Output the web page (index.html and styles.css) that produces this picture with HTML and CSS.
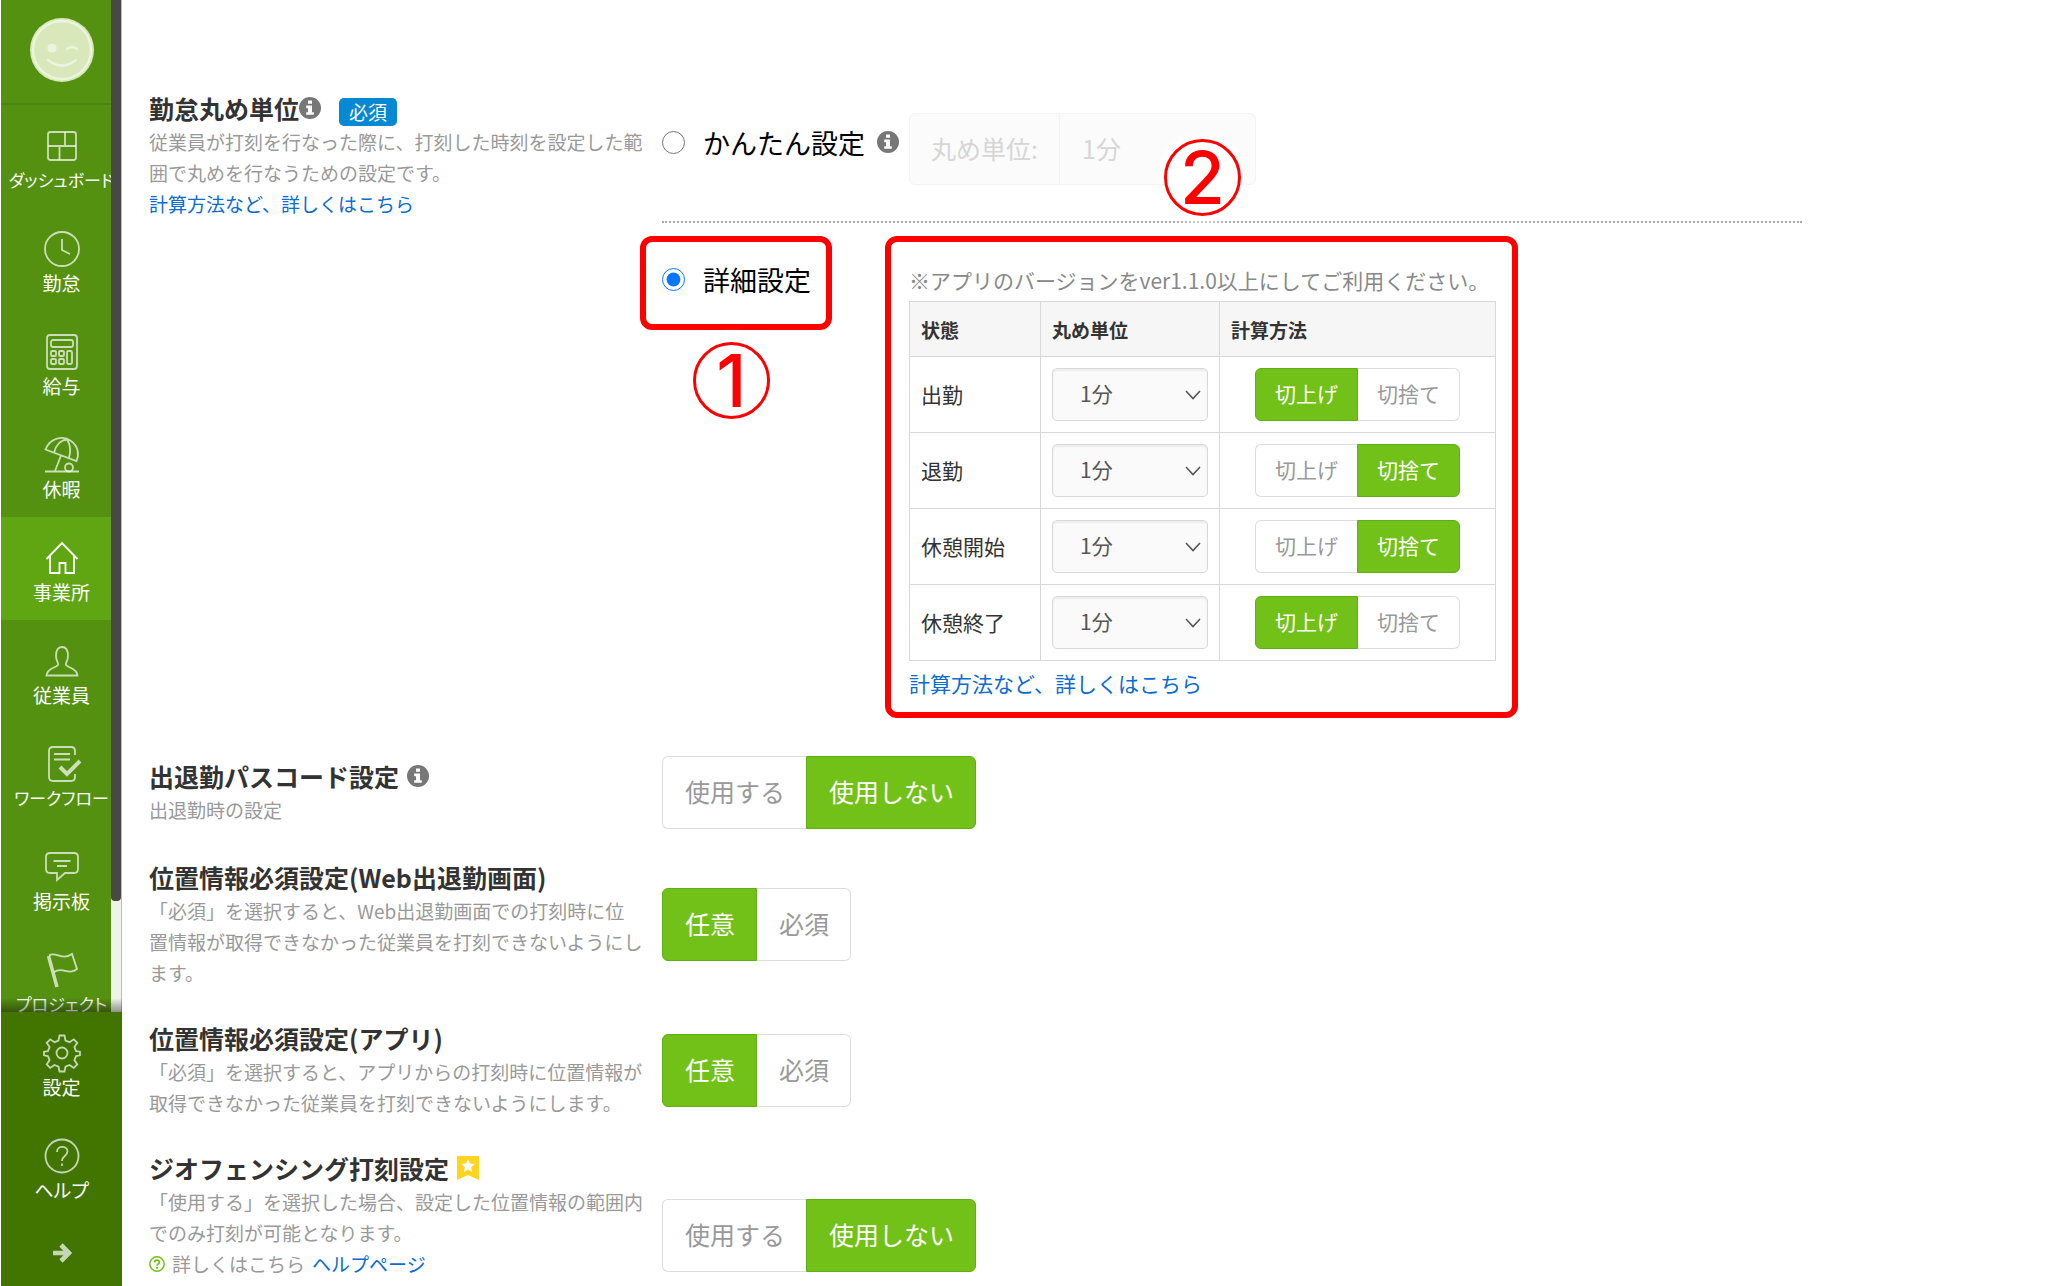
FILE: index.html
```html
<!DOCTYPE html>
<html lang="ja">
  <head>
    <meta charset="UTF-8" />
    <meta name="viewport" content="width=device-width, initial-scale=1.0" />
    <title>事業所設定</title>
    <link rel="stylesheet" href="styles.css">
  </head>
  <body>
    <!-- アイコン定義 -->
    <svg class="icon-defs" width="0" height="0" aria-hidden="true">
      <symbol id="icon-info" viewBox="0 0 22 22">
        <circle cx="11" cy="11" r="11" fill="#777" />
        <path d="M9 3.6h4v3.2H9zM7.2 8.6h5.8v6.6h1.8v2.6H7.2v-2.6H9v-4H7.2z" fill="#fff" />
      </symbol>
      <symbol id="icon-chevron" viewBox="0 0 16 10">
        <path d="M1 1l7 7.5L15 1" fill="none" stroke="#555" stroke-width="1.6" />
      </symbol>
    </svg>

    <aside class="sidebar">
      <nav class="sidebar-scroll">
        <a href="#" class="avatar" aria-label="マイページ">
          <svg width="64" height="64" viewBox="0 0 64 64">
            <circle cx="32" cy="32" r="32" fill="#d8e8ba" />
            <circle cx="32" cy="32" r="29" fill="none" stroke="#ecf4e0" stroke-width="2.4" />
            <circle cx="22" cy="30" r="4.6" fill="#ecf4e0" />
            <path d="M37 31q5-4 10 0M18 42q14 11 28 0" fill="none" stroke="#ecf4e0" stroke-width="2.4" stroke-linecap="round" />
          </svg>
        </a>
        <a href="#" class="nav-item long">
          <svg class="nav-icon" viewBox="0 0 40 40">
            <rect x="6" y="6" width="28" height="28" rx="2.5" />
            <path d="M6 20h28M23 6v14M17.500 20v14" />
          </svg>
          <span>ダッシュボード</span>
        </a>
        <a href="#" class="nav-item">
          <svg class="nav-icon" viewBox="0 0 40 40">
            <circle cx="20" cy="20" r="17" />
            <path d="M20 10v11l8 4" />
          </svg>
          <span>勤怠</span>
        </a>
        <a href="#" class="nav-item">
          <svg class="nav-icon" viewBox="0 0 40 40">
            <rect x="5" y="3" width="30" height="34" rx="3" />
            <rect x="9" y="8" width="22" height="7" rx="2" />
            <rect x="9" y="19" width="5" height="5" rx="1" />
            <rect x="17" y="19" width="5" height="5" rx="1" />
            <rect x="9" y="27" width="5" height="5" rx="1" />
            <rect x="17" y="27" width="5" height="5" rx="1" />
            <rect x="25" y="19" width="5" height="13" rx="1.500" />
          </svg>
          <span>給与</span>
        </a>
        <a href="#" class="nav-item">
          <svg class="nav-icon" viewBox="0 0 40 40">
            <path d="M3.500 14.500C8 3 21 0 29 6c7 5 8.500 13 5.500 20zM12 17.500C14 10 19 5 25 4.500M27 23c2-7 1-14-2-18.500M19 20.500L13 36M3 36.500h34" />
            <circle cx="27" cy="32.500" r="4" />
          </svg>
          <span>休暇</span>
        </a>
        <a href="#" class="nav-item active">
          <svg class="nav-icon" viewBox="0 0 40 40">
            <path d="M4.500 21L20 5l15.500 16M8 18v17h9.500V25h6v10H32V18" />
          </svg>
          <span>事業所</span>
        </a>
        <a href="#" class="nav-item">
          <svg class="nav-icon" viewBox="0 0 40 40">
            <path d="M16 24c1-2-2-4-2-9 0-6 2-9 6-9s6 3 6 9c0 5-3 7-2 9 2 3 11 3 11.500 10.500h-31C5 27 14 27 16 24z" />
          </svg>
          <span>従業員</span>
        </a>
        <a href="#" class="nav-item long">
          <svg class="nav-icon" viewBox="0 0 40 40">
            <path d="M33 11V7q0-4-4-4H11q-4 0-4 4v26q0 4 4 4h18q4 0 4-4v-3M12 10h16M12 15.500h16" />
            <path d="M18 23l7 7L38 17" stroke-width="4" />
          </svg>
          <span>ワークフロー</span>
        </a>
        <a href="#" class="nav-item">
          <svg class="nav-icon" viewBox="0 0 40 40">
            <path d="M8 6h24q4 0 4 4v12q0 4-4 4h-9l-8 7v-7H8q-4 0-4-4V10q0-4 4-4zM11.500 14h17M15 19h10" />
          </svg>
          <span>掲示板</span>
        </a>
        <a href="#" class="nav-item long">
          <svg class="nav-icon" viewBox="0 0 40 40">
            <path d="M7 5.500C14 1 20 11 30 4l5 15c-9 7-14-3-23 3" />
            <path d="M6.500 6L15 37" stroke-width="3.500" />
          </svg>
          <span>プロジェクト</span>
        </a>
        <div class="scroll-track"><div class="scroll-thumb"></div></div>
      </nav>
      <div class="sidebar-bottom">
        <a href="#" class="nav-item">
          <svg class="nav-icon" viewBox="0 0 40 40">
            <path d="M17.500 2.500h5l1 5 4 1.700 4.300-2.900 3.500 3.500-2.900 4.300 1.700 4 3.900.6v3.600l-3.900.8-1.700 4 2.900 4.300-3.500 3.500-4.300-2.900-4 1.700-1 4.800h-5l-1-4.800-4-1.700-4.300 2.900-3.500-3.500 2.900-4.300-1.700-4-3.900-.8v-3.600l3.900-.6 1.700-4-2.900-4.300 3.500-3.500 4.300 2.900 4-1.700z" />
            <circle cx="20" cy="20" r="5.500" />
          </svg>
          <span>設定</span>
        </a>
        <a href="#" class="nav-item">
          <svg class="nav-icon" viewBox="0 0 40 40">
            <circle cx="20" cy="20" r="16.500" />
            <path d="M15 16c0-7 10.500-6.500 10.500-.5 0 4.500-5.500 4-5.500 9.500M20 27.500v2.500" />
          </svg>
          <span>ヘルプ</span>
        </a>
        <button type="button" class="sidebar-expand" aria-label="メニューを開く">
          <svg width="20" height="20" viewBox="0 0 20 20">
            <path d="M1 10h15M9 2l8 8-8 8" fill="none" stroke="currentColor" stroke-width="4.600" />
          </svg>
        </button>
      </div>
    </aside>

    <main class="content">
      <section class="setting-row rounding">
        <div class="setting-label">
          <h2>勤怠丸め単位<svg class="info"><use href="#icon-info" /></svg><span class="badge">必須</span></h2>
          <p>従業員が打刻を行なった際に、打刻した時刻を設定した範囲で丸めを行なうための設定です。</p>
          <a href="#">計算方法など、詳しくはこちら</a>
        </div>
        <div class="setting-field">
          <div class="option option-simple">
            <div class="option-name">
              <input type="radio" name="rounding" id="rounding-simple" />
              <label for="rounding-simple">かんたん設定</label>
              <svg class="info"><use href="#icon-info" /></svg>
            </div>
            <div class="simple-unit">
              <label for="simple-unit">丸め単位:</label>
              <select id="simple-unit" disabled>
                <option>1分</option>
              </select>
            </div>
          </div>
          <div class="option option-detail">
            <div class="option-name">
              <input type="radio" name="rounding" id="rounding-detail" checked />
              <label for="rounding-detail">詳細設定</label>
            </div>
            <div class="detail-body">
              <p class="note">※アプリのバージョンをver1.1.0以上にしてご利用ください。</p>
              <table>
                <thead>
                  <tr>
                    <th class="col-state">状態</th>
                    <th class="col-unit">丸め単位</th>
                    <th class="col-method">計算方法</th>
                  </tr>
                </thead>
                <tbody>
                  <tr>
                    <td>出勤</td>
                    <td>
                      <div class="select-box">
                        <select aria-label="出勤の丸め単位"><option>1分</option></select>
                        <svg><use href="#icon-chevron" /></svg>
                      </div>
                    </td>
                    <td>
                      <div class="toggle small">
                        <button type="button" class="on">切上げ</button>
                        <button type="button">切捨て</button>
                      </div>
                    </td>
                  </tr>
                  <tr>
                    <td>退勤</td>
                    <td>
                      <div class="select-box">
                        <select aria-label="退勤の丸め単位"><option>1分</option></select>
                        <svg><use href="#icon-chevron" /></svg>
                      </div>
                    </td>
                    <td>
                      <div class="toggle small">
                        <button type="button">切上げ</button>
                        <button type="button" class="on">切捨て</button>
                      </div>
                    </td>
                  </tr>
                  <tr>
                    <td>休憩開始</td>
                    <td>
                      <div class="select-box">
                        <select aria-label="休憩開始の丸め単位"><option>1分</option></select>
                        <svg><use href="#icon-chevron" /></svg>
                      </div>
                    </td>
                    <td>
                      <div class="toggle small">
                        <button type="button">切上げ</button>
                        <button type="button" class="on">切捨て</button>
                      </div>
                    </td>
                  </tr>
                  <tr>
                    <td>休憩終了</td>
                    <td>
                      <div class="select-box">
                        <select aria-label="休憩終了の丸め単位"><option>1分</option></select>
                        <svg><use href="#icon-chevron" /></svg>
                      </div>
                    </td>
                    <td>
                      <div class="toggle small">
                        <button type="button" class="on">切上げ</button>
                        <button type="button">切捨て</button>
                      </div>
                    </td>
                  </tr>
                </tbody>
              </table>
              <a href="#" class="detail-link">計算方法など、詳しくはこちら</a>
            </div>

            <!-- 手順の注釈 -->
            <div class="mark mark-option"></div>
            <div class="mark mark-table"></div>
            <span class="step step-1">1</span>
            <span class="step step-2">2</span>
          </div>
        </div>
      </section>

      <section class="setting-row">
        <div class="setting-label">
          <h2>出退勤パスコード設定<svg class="info spaced"><use href="#icon-info" /></svg></h2>
          <p>出退勤時の設定</p>
        </div>
        <div class="toggle">
          <button type="button">使用する</button>
          <button type="button" class="on">使用しない</button>
        </div>
      </section>

      <section class="setting-row">
        <div class="setting-label">
          <h2>位置情報必須設定(Web出退勤画面)</h2>
          <p>「必須」を選択すると、Web出退勤画面での打刻時に位<br />置情報が取得できなかった従業員を打刻できないようにします。</p>
        </div>
        <div class="toggle">
          <button type="button" class="on">任意</button>
          <button type="button">必須</button>
        </div>
      </section>

      <section class="setting-row">
        <div class="setting-label">
          <h2>位置情報必須設定(アプリ)</h2>
          <p>「必須」を選択すると、アプリからの打刻時に位置情報が取得できなかった従業員を打刻できないようにします。</p>
        </div>
        <div class="toggle">
          <button type="button" class="on">任意</button>
          <button type="button">必須</button>
        </div>
      </section>

      <section class="setting-row geofence">
        <div class="setting-label">
          <h2>ジオフェンシング打刻設定<svg class="star" viewBox="0 0 22 24">
              <path d="M0 0h22v24l-11-5-11 5z" fill="#ffd41f" />
              <path d="M11 3l2 4.500 4.800.5-3.600 3.300 1 4.800L11 13.600l-4.200 2.500 1-4.800L4.200 8l4.800-.5z" fill="#fff" />
            </svg></h2>
          <p>「使用する」を選択した場合、設定した位置情報の範囲内でのみ打刻が可能となります。</p>
          <p class="help-line">
            <svg width="16" height="16" viewBox="0 0 16 16">
              <circle cx="8" cy="8" r="7.200" fill="none" stroke="#72c118" stroke-width="1.500" />
              <path d="M5.700 6.500c0-3.200 4.700-3 4.700-.3 0 1.700-2.300 1.700-2.300 3.500M8 11v1.800" fill="none" stroke="#72c118" stroke-width="1.800" />
            </svg>
            <span>詳しくはこちら</span>
            <a href="#">ヘルプページ</a>
          </p>
        </div>
        <div class="toggle">
          <button type="button">使用する</button>
          <button type="button" class="on">使用しない</button>
        </div>
      </section>
    </main>
  </body>
</html>
```
FILE: styles.css
```css
* {
  margin: 0;
  padding: 0;
  box-sizing: border-box;
}

body {
  display: flex;
  height: 100vh;
  overflow: hidden;
  background-color: #fff;
  color: #333;
  font-family: "Noto Sans CJK JP", sans-serif;
  font-size: 19px;
  line-height: 31px;
}

a {
  color: #0a6bd0;
  text-decoration: none;
}

button,
select {
  font-family: inherit;
}

.icon-defs {
  position: absolute;
}

/* サイドバー */
.sidebar {
  display: flex;
  flex-direction: column;
  flex: none;
  width: 121px;
  margin-left: 1px;
}

.sidebar-scroll {
  position: relative;
  flex: 1;
  overflow: hidden;
  background-color: #549110;
}

.sidebar-scroll::after {
  content: "";
  position: absolute;
  left: 0;
  right: 0;
  bottom: 0;
  height: 14px;
  background: linear-gradient(rgba(0, 0, 0, 0), rgba(0, 0, 0, 0.4));
}

.avatar {
  display: block;
  height: 105px;
  padding-top: 18px;
  border-bottom: 2px solid #4b8510;
  text-align: center;
}

.nav-item {
  display: flex;
  flex-direction: column;
  align-items: center;
  height: 103px;
  padding-top: 21px;
  color: #fff;
  line-height: 28px;
  white-space: nowrap;
  font-feature-settings: "palt";
}

.nav-item.long {
  font-size: 17px;
}

.nav-item.active {
  background-color: #60a613;
}

.nav-icon {
  flex: none;
  width: 40px;
  height: 40px;
  fill: none;
  stroke: rgba(255, 255, 255, 0.7);
  stroke-width: 1.8;
}

.nav-item.active .nav-icon {
  stroke: #fff;
}

.scroll-track {
  position: absolute;
  top: 0;
  right: 0;
  width: 11px;
  height: 100%;
  background-color: #eef4e8;
  border-right: 1px solid #bbb;
}

.scroll-thumb {
  height: 89%;
  background-color: #4a4846;
  border-radius: 0 0 4px 4px;
}

.sidebar-bottom {
  height: 274px;
  background-color: #417500;
}

.sidebar-expand {
  display: flex;
  justify-content: center;
  width: 100%;
  padding-top: 25px;
  border: none;
  background: none;
  color: #c6d5b3;
}

/* 設定一覧 */
.content {
  display: flex;
  flex-direction: column;
  gap: 30px;
  flex: 1;
  min-width: 0;
  padding: 90px 12% 0 27px;
}

.setting-row {
  display: grid;
  grid-template-columns: 497px 1fr;
  column-gap: 16px;
  align-items: center;
  flex: none;
}

.setting-row.rounding {
  align-items: start;
}

.setting-row.geofence {
  min-height: 171px;
}

.geofence .setting-label {
  align-self: start;
}

.setting-label {
  padding-bottom: 2px;
}

.setting-label h2 {
  display: flex;
  align-items: center;
  font-size: 25px;
  line-height: 36px;
}

.setting-label p {
  color: #999;
}

.info {
  flex: none;
  width: 22px;
  height: 22px;
}

.info.spaced {
  margin-left: 8px;
}

.star {
  width: 22px;
  height: 24px;
  margin-left: 8px;
}

.badge {
  align-self: flex-end;
  margin-left: 18px;
  padding: 0 10px;
  border-radius: 5px;
  background-color: #0688d2;
  color: #fff;
  font-size: 19px;
  font-weight: normal;
  line-height: 28px;
}

.help-line {
  display: flex;
  align-items: center;
  gap: 7px;
}

/* 切り替えボタン */
.toggle {
  display: flex;
}

.toggle button {
  height: 73px;
  padding: 0 21px 3px 22px;
  border: 1px solid #ddd;
  background-color: #fff;
  color: #999;
  font-size: 25px;
}

.toggle button:first-child {
  border-right: none;
  border-radius: 6px 0 0 6px;
}

.toggle button:last-child {
  border-left: none;
  border-radius: 0 6px 6px 0;
}

.toggle button.on {
  border: 1px solid #62ad12;
  background-color: #72c118;
  color: #fff;
}

.toggle.small {
  justify-content: center;
}

.toggle.small button {
  height: 53px;
  padding: 0 19px 3px;
  font-size: 21px;
}

/* 丸め設定 */
.setting-field {
  padding: 23px 0 24px;
}

.option {
  display: grid;
  grid-template-columns: 247px 1fr;
  align-items: start;
}

.option-simple {
  padding-bottom: 36px;
  border-bottom: 2px dotted #aaa;
}

.option-detail {
  position: relative;
  padding-top: 37px;
}

.option-name {
  display: flex;
  align-items: center;
  height: 38px;
  color: #000;
  font-size: 27px;
}

.option-simple .option-name {
  margin-top: 10px;
}

.option-name input {
  width: 23px;
  height: 23px;
  margin-right: 18px;
  accent-color: #0a75ff;
}

.option-name .info {
  margin-left: 12px;
}

.simple-unit {
  display: flex;
  width: 347px;
  height: 72px;
  border: 1px solid #f3f3f3;
  border-radius: 6px;
  background-color: #fbfbfb;
  color: #d6d6d6;
  font-size: 25px;
  line-height: 68px;
}

.simple-unit label {
  width: 150px;
  padding-left: 21px;
  border-right: 1px solid #f3f3f3;
}

.simple-unit select {
  flex: 1;
  appearance: none;
  padding: 0 0 3px 22px;
  border: none;
  background: none;
  color: #d6d6d6;
  font-size: 25px;
  opacity: 1;
}

.detail-body {
  font-size: 21px;
}

.note {
  margin: 2px 0;
  color: #888;
  line-height: 37px;
}

table {
  width: 587px;
  border-collapse: collapse;
  table-layout: fixed;
}

th,
td {
  height: 76px;
  padding: 0 11px;
  border: 1px solid #d8d8d8;
  text-align: left;
}

th {
  height: 55px;
  background-color: #f6f6f6;
  font-size: 19px;
}

.col-state {
  width: 131px;
}

.col-unit {
  width: 179px;
}

.select-box {
  position: relative;
}

.select-box select {
  display: block;
  width: 100%;
  height: 53px;
  appearance: none;
  padding: 0 0 3px 27px;
  border: 1px solid #d8d8d8;
  border-radius: 5px;
  background-color: #fafafa;
  box-shadow: inset 0 2px 2px rgba(0, 0, 0, 0.06);
  color: #555;
  font-size: 21px;
}

.select-box svg {
  position: absolute;
  top: 22px;
  right: 7px;
  width: 16px;
  height: 10px;
  pointer-events: none;
}

.detail-link {
  display: block;
  margin-top: 4px;
  line-height: 37px;
}

/* 注釈 */
.mark {
  position: absolute;
  top: 13px;
  border: 6px solid #f00;
  border-radius: 12px;
  pointer-events: none;
}

.mark-option {
  left: -22px;
  width: 192px;
  height: 94px;
}

.mark-table {
  left: 223px;
  width: 633px;
  height: 482px;
}

.step {
  position: absolute;
  width: 77px;
  height: 77px;
  border: 3px solid #f00;
  border-radius: 50%;
  background-color: #fff;
  box-shadow: 0 0 8px 6px rgba(255, 255, 255, 0.8);
  color: #f00;
  font-family: Inter, sans-serif;
  font-size: 73px;
  font-weight: 500;
  line-height: 72px;
  text-align: center;
}

.step-1 {
  left: 31px;
  top: 119px;
}

.step-2 {
  left: 502px;
  top: -84px;
}
```
